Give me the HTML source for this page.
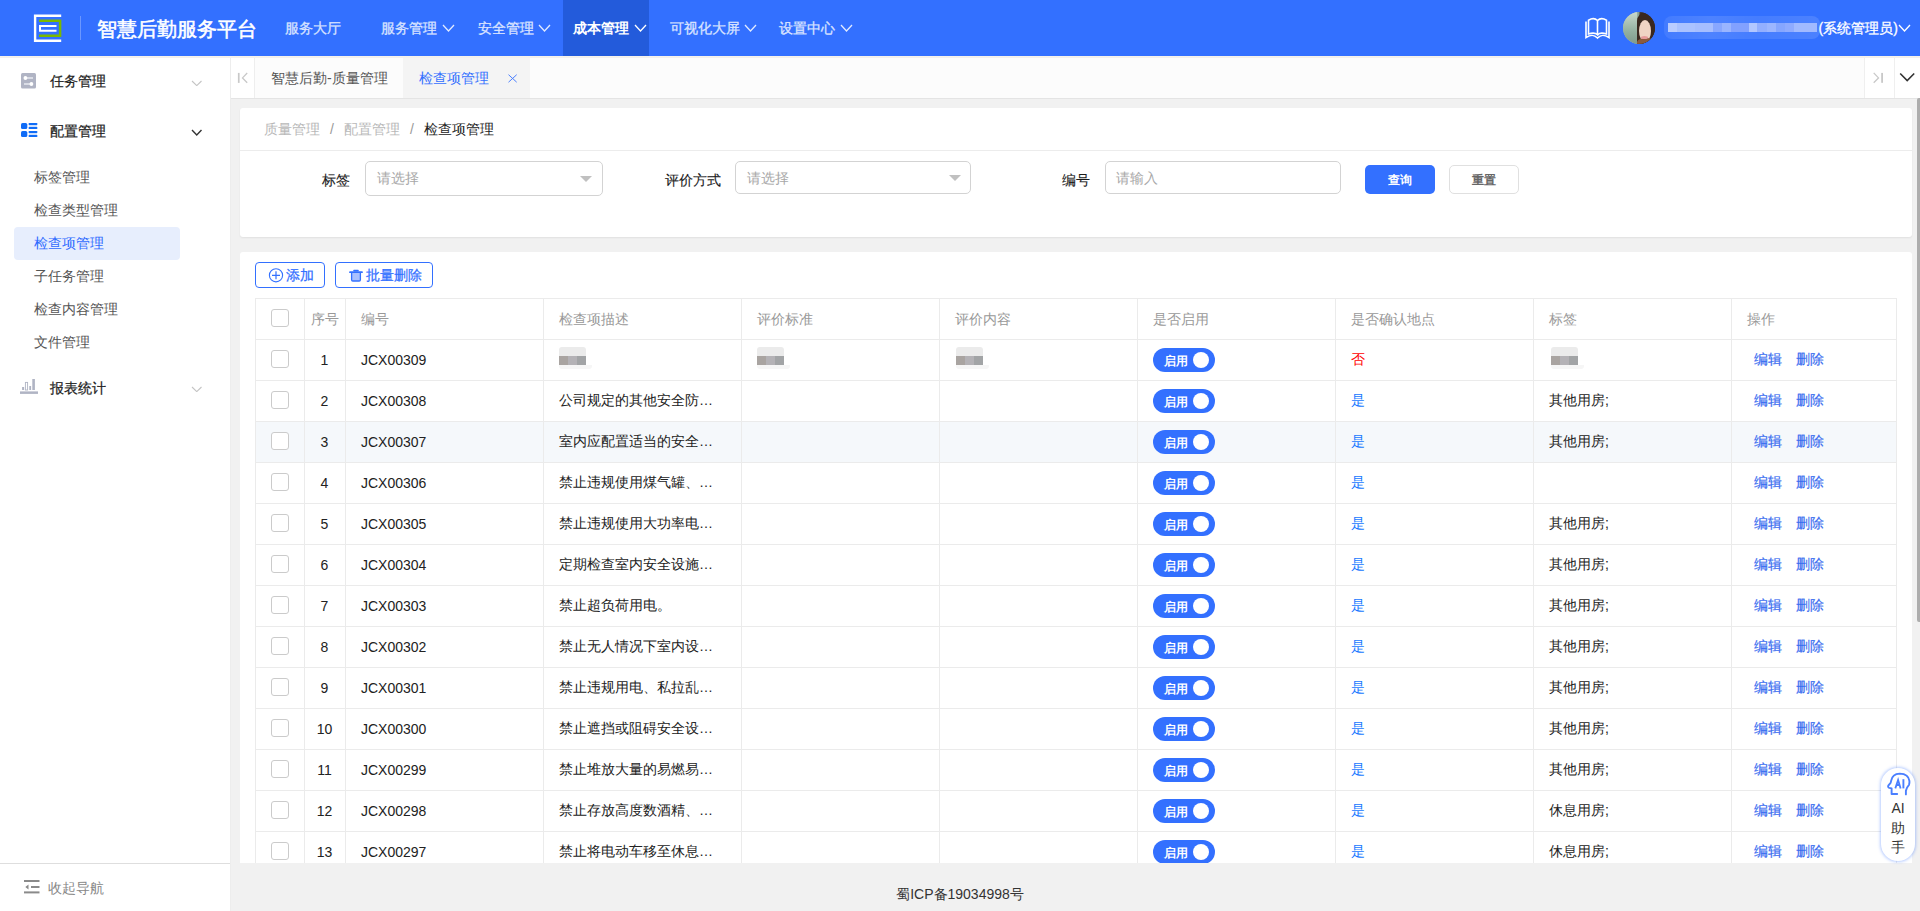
<!DOCTYPE html>
<html><head><meta charset="utf-8"><title>检查项管理</title><style>
*{margin:0;padding:0;box-sizing:border-box}
html,body{width:1920px;height:911px;overflow:hidden}
body{position:relative;background:#f1f1f1;font-family:"Liberation Sans",sans-serif;font-size:14px;color:#333}
.a{position:absolute;white-space:nowrap}
#hd{left:0;top:0;width:1920px;height:56px;background:#3370ff}
.nav{top:0;height:56px;line-height:56px;color:#d9e3ff;-webkit-text-stroke:.3px #d9e3ff;font-size:14px}
.nav.on{color:#fff;font-weight:bold;-webkit-text-stroke:0}
.chev{position:absolute}
#side{left:0;top:56px;width:231px;height:855px;background:#fff;border-right:1px solid #ededed}
.mt{font-size:14px;color:#1f1f1f;-webkit-text-stroke:.25px #1f1f1f;line-height:20px}
.sm{font-size:14px;color:#555;line-height:20px}
#tabs{left:231px;top:58px;width:1689px;height:41px;background:#fcfcfc;border-bottom:1px solid #e4e4e4}
.card{background:#fff;border-radius:3px;box-shadow:0 1px 2px rgba(0,0,0,.07)}
.lbl{font-size:14px;color:#1a1a1a;-webkit-text-stroke:.12px #1a1a1a;line-height:20px}
.sel{border:1px solid #d3d3d3;border-radius:5px;background:#fff}
.ph{font-size:14px;color:#a8a8a8;line-height:20px}
.tri{position:absolute;width:0;height:0;border-left:6px solid transparent;border-right:6px solid transparent;border-top:6px solid #c0c0c0}
.th{font-size:14px;color:#999;line-height:20px}
.td{font-size:14px;color:#222;line-height:20px}
.cb{position:absolute;width:17.5px;height:17.5px;border:1px solid #cbcbcb;border-radius:3px;background:#fff}
.sw{position:absolute;width:62px;height:24px;border-radius:12px;background:#3370ff}
.sw b{position:absolute;left:11px;top:3px;font-size:12px;line-height:20px;color:#fff;font-weight:bold}
.sw i{position:absolute;right:6px;top:4px;width:16px;height:16px;border-radius:50%;background:#fff}
.lk{font-size:14px;color:#3a6df0;line-height:20px;-webkit-text-stroke:.2px #3a6df0}
.blur{position:absolute}
</style></head><body>
<div class="a" id="hd"></div>
<svg class="a" style="left:30px;top:10px" width="36" height="36" viewBox="30 10 36 36">
<path d="M61.2 15.8H35.1V40.8H61.2" fill="none" stroke="#fff" stroke-width="2.4"/>
<path d="M39 20.75H60.1V35.8H39" fill="none" stroke="#7ab800" stroke-width="2.5"/>
<path d="M56.5 25.9H40V30.8H56.5" fill="none" stroke="#fff" stroke-width="2"/>
</svg>
<div class="a" style="left:80px;top:16px;width:1px;height:24px;background:rgba(255,255,255,.28)"></div>
<div class="a" style="left:97px;top:1px;height:56px;line-height:56px;font-size:20px;color:#fff;-webkit-text-stroke:.55px #fff">智慧后勤服务平台</div>
<div class="a nav" style="left:285px">服务大厅</div>
<div class="a" style="left:563px;top:0;width:86px;height:56px;background:#235bdb"></div>
<div class="a nav" style="left:381px">服务管理</div>
<svg class="a" style="left:441.5px;top:23.5px" width="13" height="8" viewBox="-1 -1 13 8"><path d="M0 0L5.5 6L11 0" fill="none" stroke="rgba(255,255,255,.85)" stroke-width="1.3"/></svg>
<div class="a nav" style="left:478px">安全管理</div>
<svg class="a" style="left:538px;top:23.5px" width="13" height="8" viewBox="-1 -1 13 8"><path d="M0 0L5.5 6L11 0" fill="none" stroke="rgba(255,255,255,.85)" stroke-width="1.3"/></svg>
<div class="a nav on" style="left:573px">成本管理</div>
<svg class="a" style="left:634px;top:23.5px" width="13" height="8" viewBox="-1 -1 13 8"><path d="M0 0L5.5 6L11 0" fill="none" stroke="#fff" stroke-width="1.3"/></svg>
<div class="a nav" style="left:670px">可视化大屏</div>
<svg class="a" style="left:744px;top:23.5px" width="13" height="8" viewBox="-1 -1 13 8"><path d="M0 0L5.5 6L11 0" fill="none" stroke="rgba(255,255,255,.85)" stroke-width="1.3"/></svg>
<div class="a nav" style="left:779px">设置中心</div>
<svg class="a" style="left:840px;top:23.5px" width="13" height="8" viewBox="-1 -1 13 8"><path d="M0 0L5.5 6L11 0" fill="none" stroke="rgba(255,255,255,.85)" stroke-width="1.3"/></svg>
<svg class="a" style="left:1583px;top:17px" width="29" height="23" viewBox="0 0 29 23">
<path d="M3 4.5V20.5C8 17.5 11 17.5 14.5 21C18 17.5 21 17.5 26 20.5V4.5" fill="none" stroke="#fff" stroke-width="1.6"/>
<path d="M5.5 17V3.2C9 1 12.5 1.5 14.5 3.5V17.8C12.5 15.8 9 15.8 5.5 17Z" fill="none" stroke="#fff" stroke-width="1.6"/>
<path d="M14.5 3.5C16.5 1.5 20 1 23.5 3.2V17C20 15.8 16.5 15.8 14.5 17.8" fill="none" stroke="#fff" stroke-width="1.6"/>
</svg>
<div class="a" style="left:1623px;top:12px;width:32px;height:32px;border-radius:50%;overflow:hidden;background:linear-gradient(90deg,#9fb8a9 0%,#b4c8bb 30%,#8fa89a 48%,#3d2b22 55%,#3d2b22 100%)">
<div style="position:absolute;left:0;top:0;width:14px;height:32px;background:linear-gradient(180deg,#c9d8cc,#93b0a0 60%,#7f9a8c)"></div>
<div style="position:absolute;left:14px;top:0;width:18px;height:32px;border-radius:9px 0 0 0;background:#3a281f"></div>
<div style="position:absolute;left:16px;top:8px;width:12px;height:22px;border-radius:50%;background:#f0d4c4"></div>
<div style="position:absolute;left:14px;top:26px;width:18px;height:8px;background:#8a5a3c;border-radius:50% 50% 0 0"></div>
<div style="position:absolute;left:18px;top:24px;width:7px;height:3px;border-radius:50%;background:#e79a9a"></div>
</div>
<div class="a" style="left:1664px;top:16px;width:156px;height:23px;border-radius:8px;background:linear-gradient(90deg,rgba(255,255,255,.08),rgba(255,255,255,.13) 30%,rgba(255,255,255,.09) 60%,rgba(255,255,255,.12))"></div>
<div class="a" style="left:1668px;top:23px;width:149px;height:9px;background:linear-gradient(90deg,#b9ccff 0.0%,#b9ccff 5.9%,#aac2ff 5.9%,#aac2ff 18.2%,#a6beff 18.2%,#a6beff 30.0%,#88a7ff 30.0%,#88a7ff 36.4%,#9ab5ff 36.4%,#9ab5ff 42.3%,#82a1ff 42.3%,#82a1ff 54.1%,#b2c7ff 54.1%,#b2c7ff 60.0%,#93afff 60.0%,#93afff 66.4%,#9cb6ff 66.4%,#9cb6ff 72.3%,#86a6ff 72.3%,#86a6ff 78.2%,#8fabff 78.2%,#8fabff 84.5%,#a1baff 84.5%,#a1baff 100.0%)"></div>
<div class="a" style="left:1818.5px;top:0;height:56px;line-height:56px;font-size:14px;color:#fff;-webkit-text-stroke:.3px #fff">(系统管理员)</div>
<svg class="a" style="left:1898px;top:23.5px" width="13" height="8" viewBox="-1 -1 13 8"><path d="M0 0L5.5 6L11 0" fill="none" stroke="#fff" stroke-width="1.3"/></svg>
<div class="a" id="side"></div>
<div class="a" style="left:0;top:56px;width:1920px;height:2px;background:linear-gradient(#f6f3ea,#efefef)"></div>
<svg class="a" style="left:21px;top:73px" width="15" height="16" viewBox="0 0 15 16">
<rect x="0" y="0" width="15" height="15.5" rx="1.5" fill="#b0b4c4"/>
<line x1="4.5" y1="5" x2="12" y2="5" stroke="#e4e6ee" stroke-width="1.6"/>
<circle cx="4.4" cy="5" r="1.9" fill="#fff"/>
<line x1="3" y1="11" x2="10.5" y2="11" stroke="#e4e6ee" stroke-width="1.6"/>
<circle cx="10.4" cy="11" r="1.9" fill="#fff"/>
</svg>
<div class="a mt" style="left:50px;top:71px">任务管理</div>
<svg class="a" style="left:191px;top:79.5px" width="11.5" height="6.6" viewBox="-1 -1 11.5 6.6"><path d="M0 0L4.75 4.6L9.5 0" fill="none" stroke="#c4c4c4" stroke-width="1.1"/></svg>
<svg class="a" style="left:21px;top:122px" width="17" height="16" viewBox="0 0 17 16">
<rect x="0" y="1" width="6.3" height="6" rx="1.6" fill="#0f6cf7"/>
<rect x="0" y="9" width="6.3" height="6" rx="1.6" fill="#0f6cf7"/>
<rect x="8" y="2" width="8" height="4" fill="#cfe0fd"/>
<rect x="8" y="10" width="8" height="4" fill="#cfe0fd"/>
<line x1="8.5" y1="2" x2="15.5" y2="2" stroke="#0f6cf7" stroke-width="2" stroke-linecap="round"/>
<line x1="8.5" y1="6" x2="15.5" y2="6" stroke="#0f6cf7" stroke-width="2" stroke-linecap="round"/>
<line x1="8.5" y1="10" x2="15.5" y2="10" stroke="#0f6cf7" stroke-width="2" stroke-linecap="round"/>
<line x1="8.5" y1="14" x2="15.5" y2="14" stroke="#0f6cf7" stroke-width="2" stroke-linecap="round"/>
</svg>
<div class="a mt" style="left:50px;top:120.5px">配置管理</div>
<svg class="a" style="left:191px;top:128.5px" width="11.5" height="7" viewBox="-1 -1 11.5 7"><path d="M0 0L4.75 5L9.5 0" fill="none" stroke="#333" stroke-width="1.4"/></svg>
<div class="a" style="left:14px;top:227px;width:166px;height:33px;border-radius:4px;background:#e7eefd"></div>
<div class="a sm" style="left:34px;top:166.5px;color:#555">标签管理</div>
<div class="a sm" style="left:34px;top:199.5px;color:#555">检查类型管理</div>
<div class="a sm" style="left:34px;top:232.5px;color:#2f6bff">检查项管理</div>
<div class="a sm" style="left:34px;top:265.5px;color:#555">子任务管理</div>
<div class="a sm" style="left:34px;top:298.5px;color:#555">检查内容管理</div>
<div class="a sm" style="left:34px;top:331.5px;color:#555">文件管理</div>
<svg class="a" style="left:20px;top:378px" width="18" height="17" viewBox="0 0 18 17">
<rect x="0" y="13.4" width="18" height="2.5" fill="#b0b4c4"/>
<rect x="2.1" y="9" width="2" height="3" fill="#b0b4c4"/>
<rect x="5.4" y="4.4" width="2.2" height="7.6" fill="none" stroke="#b0b4c4" stroke-width=".9"/>
<rect x="9.3" y="8" width="1.8" height="4" fill="#b0b4c4"/>
<rect x="12.3" y="1" width="2.6" height="11" fill="#b0b4c4"/>
</svg>
<div class="a mt" style="left:50px;top:377.5px">报表统计</div>
<svg class="a" style="left:191px;top:385.5px" width="11.5" height="6.6" viewBox="-1 -1 11.5 6.6"><path d="M0 0L4.75 4.6L9.5 0" fill="none" stroke="#c4c4c4" stroke-width="1.1"/></svg>
<div class="a" style="left:0;top:863px;width:230px;height:1px;background:#dedede"></div>
<svg class="a" style="left:24px;top:879px" width="16" height="15" viewBox="0 0 16 15">
<rect x="0" y="1" width="15.5" height="2" fill="#8a8a8a"/>
<rect x="7" y="7" width="8.5" height="2" fill="#8a8a8a"/>
<rect x="0" y="12.4" width="15.5" height="2" fill="#8a8a8a"/>
<path d="M1.3 8L4.5 5.6V10.4Z" fill="#8a8a8a"/>
</svg>
<div class="a sm" style="left:48px;top:877.5px;color:#888">收起导航</div>
<div class="a" id="tabs"></div>
<div class="a" style="left:231px;top:58px;width:24px;height:40px;background:#fff;border-right:1px solid #eeeeee"></div>
<svg class="a" style="left:237px;top:72px" width="12" height="12" viewBox="0 0 12 12">
<rect x="0.9" y="0.9" width="1.7" height="10" fill="#c8c8c8"/>
<path d="M10.2 1L5.5 5.9L10.2 10.8" fill="none" stroke="#c8c8c8" stroke-width="1.3"/>
</svg>
<div class="a" style="left:403px;top:58px;width:127px;height:40px;background:#f4f4f4"></div>
<div class="a" style="left:271px;top:67.5px;font-size:14px;line-height:20px;color:#555">智慧后勤-质量管理</div>
<div class="a" style="left:419px;top:67.5px;font-size:14px;line-height:20px;color:#3370ff">检查项管理</div>
<svg class="a" style="left:507px;top:73px" width="11" height="11" viewBox="0 0 11 11">
<path d="M1.5 1.7L9.7 9.2M9.7 1.7L1.5 9.2" stroke="#4b80ff" stroke-width="1"/></svg>
<div class="a" style="left:1864px;top:58px;width:56px;height:40px;background:#fff;border-left:1px solid #efefef"></div>
<div class="a" style="left:1894px;top:58px;width:1px;height:40px;background:#efefef"></div>
<svg class="a" style="left:1872px;top:71px" width="13" height="13" viewBox="0 0 13 13">
<path d="M1.7 1.9L6.5 6.9L1.7 11.8" fill="none" stroke="#c8c8c8" stroke-width="1.3"/>
<rect x="9.2" y="1.9" width="1.8" height="9.9" fill="#c8c8c8"/></svg>
<svg class="a" style="left:1899px;top:72px" width="17" height="11" viewBox="0 0 17 11">
<path d="M1.2 1.5L8.2 8.5L15.2 1.5" fill="none" stroke="#333" stroke-width="1.6"/></svg>
<div class="a card" style="left:240px;top:108px;width:1672px;height:129px"></div>
<div class="a" style="left:240px;top:150px;width:1672px;height:1px;background:#ececec"></div>
<div class="a" style="left:264px;top:119px;font-size:14px;line-height:20px;color:#b8b8b8">质量管理</div>
<div class="a" style="left:330px;top:119px;font-size:14px;line-height:20px;color:#999">/</div>
<div class="a" style="left:344px;top:119px;font-size:14px;line-height:20px;color:#b8b8b8">配置管理</div>
<div class="a" style="left:410px;top:119px;font-size:14px;line-height:20px;color:#999">/</div>
<div class="a" style="left:424px;top:119px;font-size:14px;line-height:20px;color:#222">检查项管理</div>
<div class="a lbl" style="left:322px;top:169.5px">标签</div>
<div class="a sel" style="left:365px;top:161px;width:238px;height:35px"></div>
<div class="a ph" style="left:377px;top:168px">请选择</div>
<div class="tri" style="left:580px;top:176px"></div>
<div class="a lbl" style="left:664.5px;top:169.5px">评价方式</div>
<div class="a sel" style="left:735px;top:161px;width:236px;height:33px"></div>
<div class="a ph" style="left:747px;top:168px">请选择</div>
<div class="tri" style="left:949px;top:175px"></div>
<div class="a lbl" style="left:1062px;top:169.5px">编号</div>
<div class="a sel" style="left:1105px;top:161px;width:236px;height:33px"></div>
<div class="a ph" style="left:1116px;top:168px">请输入</div>
<div class="a" style="left:1365px;top:165px;width:70px;height:29px;border-radius:5px;background:#3370ff"></div>
<div class="a" style="left:1388px;top:170px;font-size:12px;line-height:20px;color:#fff;font-weight:bold">查询</div>
<div class="a" style="left:1449px;top:165px;width:70px;height:29px;border-radius:5px;border:1px solid #e0e0e0;background:#fff"></div>
<div class="a" style="left:1472px;top:170px;font-size:12px;line-height:20px;color:#666;font-weight:bold">重置</div>
<div class="a card" style="left:240px;top:252px;width:1672px;height:611px;overflow:hidden;box-shadow:none;border-radius:3px 3px 0 0" id="c2">
<div class="a" style="left:15px;top:10px;width:70px;height:26px;border:1px solid #3370ff;border-radius:4px"></div>
<svg class="a" style="left:28px;top:16px" width="16" height="16" viewBox="0 0 16 16">
<circle cx="8" cy="7.3" r="6.6" fill="none" stroke="#3370ff" stroke-width="1.1"/>
<path d="M4 7.3H12M8 3.3V11.3" stroke="#3370ff" stroke-width="1.2"/></svg>
<div class="a" style="left:46px;top:13px;font-size:14px;line-height:20px;color:#3370ff;-webkit-text-stroke:.25px #3370ff">添加</div>
<div class="a" style="left:95px;top:10px;width:98px;height:26px;border:1px solid #3370ff;border-radius:4px"></div>
<svg class="a" style="left:109px;top:17px" width="14" height="13" viewBox="0 0 14 13">
<path d="M1 3.2H13" stroke="#3370ff" stroke-width="1.8" stroke-linecap="round"/>
<path d="M5 1.6H9" stroke="#3370ff" stroke-width="1.6" stroke-linecap="round"/>
<path d="M2.6 4V10.8Q2.6 12 3.8 12H10.2Q11.4 12 11.4 10.8V4" fill="#a9c0ff" stroke="#3370ff" stroke-width="1.3"/></svg>
<div class="a" style="left:126px;top:13px;font-size:14px;line-height:20px;color:#3370ff;-webkit-text-stroke:.25px #3370ff">批量删除</div>
<div class="a" style="left:15px;top:169px;width:1641px;height:41px;background:#f5f8fb"></div>
<div class="a" style="left:15px;top:46px;width:1642px;height:1px;background:#ebebeb"></div>
<div class="a" style="left:15px;top:87px;width:1642px;height:1px;background:#ebebeb"></div>
<div class="a" style="left:15px;top:128px;width:1642px;height:1px;background:#ebebeb"></div>
<div class="a" style="left:15px;top:169px;width:1642px;height:1px;background:#ebebeb"></div>
<div class="a" style="left:15px;top:210px;width:1642px;height:1px;background:#ebebeb"></div>
<div class="a" style="left:15px;top:251px;width:1642px;height:1px;background:#ebebeb"></div>
<div class="a" style="left:15px;top:292px;width:1642px;height:1px;background:#ebebeb"></div>
<div class="a" style="left:15px;top:333px;width:1642px;height:1px;background:#ebebeb"></div>
<div class="a" style="left:15px;top:374px;width:1642px;height:1px;background:#ebebeb"></div>
<div class="a" style="left:15px;top:415px;width:1642px;height:1px;background:#ebebeb"></div>
<div class="a" style="left:15px;top:456px;width:1642px;height:1px;background:#ebebeb"></div>
<div class="a" style="left:15px;top:497px;width:1642px;height:1px;background:#ebebeb"></div>
<div class="a" style="left:15px;top:538px;width:1642px;height:1px;background:#ebebeb"></div>
<div class="a" style="left:15px;top:579px;width:1642px;height:1px;background:#ebebeb"></div>
<div class="a" style="left:15px;top:620px;width:1642px;height:1px;background:#ebebeb"></div>
<div class="a" style="left:15px;top:46px;width:1px;height:574px;background:#ebebeb"></div>
<div class="a" style="left:64px;top:46px;width:1px;height:574px;background:#ebebeb"></div>
<div class="a" style="left:105px;top:46px;width:1px;height:574px;background:#ebebeb"></div>
<div class="a" style="left:303px;top:46px;width:1px;height:574px;background:#ebebeb"></div>
<div class="a" style="left:501px;top:46px;width:1px;height:574px;background:#ebebeb"></div>
<div class="a" style="left:699px;top:46px;width:1px;height:574px;background:#ebebeb"></div>
<div class="a" style="left:897px;top:46px;width:1px;height:574px;background:#ebebeb"></div>
<div class="a" style="left:1095px;top:46px;width:1px;height:574px;background:#ebebeb"></div>
<div class="a" style="left:1293px;top:46px;width:1px;height:574px;background:#ebebeb"></div>
<div class="a" style="left:1491px;top:46px;width:1px;height:574px;background:#ebebeb"></div>
<div class="a" style="left:1656px;top:46px;width:1px;height:574px;background:#ebebeb"></div>
<div class="cb" style="left:31px;top:57px"></div>
<div class="a th" style="left:71px;top:57.0px">序号</div>
<div class="a th" style="left:121px;top:57.0px">编号</div>
<div class="a th" style="left:319px;top:57.0px">检查项描述</div>
<div class="a th" style="left:517px;top:57.0px">评价标准</div>
<div class="a th" style="left:715px;top:57.0px">评价内容</div>
<div class="a th" style="left:913px;top:57.0px">是否启用</div>
<div class="a th" style="left:1111px;top:57.0px">是否确认地点</div>
<div class="a th" style="left:1309px;top:57.0px">标签</div>
<div class="a th" style="left:1507px;top:57.0px">操作</div>
<div class="cb" style="left:31px;top:98px"></div>
<div class="a td" style="left:64px;top:98.0px;width:41px;text-align:center">1</div>
<div class="a td" style="left:121px;top:98.0px">JCX00309</div>
<div class="blur" style="left:319px;top:95px;width:27px;height:9px;background:#ebebeb;border-radius:3px 3px 0 0"></div><div class="blur" style="left:319px;top:104px;width:27px;height:9px;background:linear-gradient(90deg,#a9a4a1 0,#a9a4a1 33%,#b4b2b6 33%,#b4b2b6 66%,#a2a4a6 66%)"></div><div class="blur" style="left:319px;top:113px;width:33px;height:4px;background:#f6f6f6;border-radius:0 0 3px 3px"></div>
<div class="blur" style="left:517px;top:95px;width:27px;height:9px;background:#ebebeb;border-radius:3px 3px 0 0"></div><div class="blur" style="left:517px;top:104px;width:27px;height:9px;background:linear-gradient(90deg,#a9a4a1 0,#a9a4a1 33%,#b4b2b6 33%,#b4b2b6 66%,#a2a4a6 66%)"></div><div class="blur" style="left:517px;top:113px;width:33px;height:4px;background:#f6f6f6;border-radius:0 0 3px 3px"></div>
<div class="blur" style="left:716px;top:95px;width:27px;height:9px;background:#ebebeb;border-radius:3px 3px 0 0"></div><div class="blur" style="left:716px;top:104px;width:27px;height:9px;background:linear-gradient(90deg,#a9a4a1 0,#a9a4a1 33%,#b4b2b6 33%,#b4b2b6 66%,#a2a4a6 66%)"></div><div class="blur" style="left:716px;top:113px;width:33px;height:4px;background:#f6f6f6;border-radius:0 0 3px 3px"></div>
<div class="sw" style="left:913px;top:96px"><b>启用</b><i></i></div>
<div class="a td" style="left:1111px;top:97.0px;color:#ff0000">否</div>
<div class="blur" style="left:1311px;top:95px;width:27px;height:9px;background:#ebebeb;border-radius:3px 3px 0 0"></div><div class="blur" style="left:1311px;top:104px;width:27px;height:9px;background:linear-gradient(90deg,#a9a4a1 0,#a9a4a1 33%,#b4b2b6 33%,#b4b2b6 66%,#a2a4a6 66%)"></div><div class="blur" style="left:1311px;top:113px;width:33px;height:4px;background:#f6f6f6;border-radius:0 0 3px 3px"></div>
<div class="a lk" style="left:1514px;top:97.0px">编辑</div>
<div class="a lk" style="left:1556px;top:97.0px">删除</div>
<div class="cb" style="left:31px;top:139px"></div>
<div class="a td" style="left:64px;top:139.0px;width:41px;text-align:center">2</div>
<div class="a td" style="left:121px;top:139.0px">JCX00308</div>
<div class="a td" style="left:319px;top:138.0px">公司规定的其他安全防…</div>
<div class="sw" style="left:913px;top:137px"><b>启用</b><i></i></div>
<div class="a td" style="left:1111px;top:138.0px;color:#1677ff">是</div>
<div class="a td" style="left:1309px;top:138.0px">其他用房;</div>
<div class="a lk" style="left:1514px;top:138.0px">编辑</div>
<div class="a lk" style="left:1556px;top:138.0px">删除</div>
<div class="cb" style="left:31px;top:180px"></div>
<div class="a td" style="left:64px;top:180.0px;width:41px;text-align:center">3</div>
<div class="a td" style="left:121px;top:180.0px">JCX00307</div>
<div class="a td" style="left:319px;top:179.0px">室内应配置适当的安全…</div>
<div class="sw" style="left:913px;top:178px"><b>启用</b><i></i></div>
<div class="a td" style="left:1111px;top:179.0px;color:#1677ff">是</div>
<div class="a td" style="left:1309px;top:179.0px">其他用房;</div>
<div class="a lk" style="left:1514px;top:179.0px">编辑</div>
<div class="a lk" style="left:1556px;top:179.0px">删除</div>
<div class="cb" style="left:31px;top:221px"></div>
<div class="a td" style="left:64px;top:221.0px;width:41px;text-align:center">4</div>
<div class="a td" style="left:121px;top:221.0px">JCX00306</div>
<div class="a td" style="left:319px;top:220.0px">禁止违规使用煤气罐、…</div>
<div class="sw" style="left:913px;top:219px"><b>启用</b><i></i></div>
<div class="a td" style="left:1111px;top:220.0px;color:#1677ff">是</div>
<div class="a lk" style="left:1514px;top:220.0px">编辑</div>
<div class="a lk" style="left:1556px;top:220.0px">删除</div>
<div class="cb" style="left:31px;top:262px"></div>
<div class="a td" style="left:64px;top:262.0px;width:41px;text-align:center">5</div>
<div class="a td" style="left:121px;top:262.0px">JCX00305</div>
<div class="a td" style="left:319px;top:261.0px">禁止违规使用大功率电…</div>
<div class="sw" style="left:913px;top:260px"><b>启用</b><i></i></div>
<div class="a td" style="left:1111px;top:261.0px;color:#1677ff">是</div>
<div class="a td" style="left:1309px;top:261.0px">其他用房;</div>
<div class="a lk" style="left:1514px;top:261.0px">编辑</div>
<div class="a lk" style="left:1556px;top:261.0px">删除</div>
<div class="cb" style="left:31px;top:303px"></div>
<div class="a td" style="left:64px;top:303.0px;width:41px;text-align:center">6</div>
<div class="a td" style="left:121px;top:303.0px">JCX00304</div>
<div class="a td" style="left:319px;top:302.0px">定期检查室内安全设施…</div>
<div class="sw" style="left:913px;top:301px"><b>启用</b><i></i></div>
<div class="a td" style="left:1111px;top:302.0px;color:#1677ff">是</div>
<div class="a td" style="left:1309px;top:302.0px">其他用房;</div>
<div class="a lk" style="left:1514px;top:302.0px">编辑</div>
<div class="a lk" style="left:1556px;top:302.0px">删除</div>
<div class="cb" style="left:31px;top:344px"></div>
<div class="a td" style="left:64px;top:344.0px;width:41px;text-align:center">7</div>
<div class="a td" style="left:121px;top:344.0px">JCX00303</div>
<div class="a td" style="left:319px;top:343.0px">禁止超负荷用电。</div>
<div class="sw" style="left:913px;top:342px"><b>启用</b><i></i></div>
<div class="a td" style="left:1111px;top:343.0px;color:#1677ff">是</div>
<div class="a td" style="left:1309px;top:343.0px">其他用房;</div>
<div class="a lk" style="left:1514px;top:343.0px">编辑</div>
<div class="a lk" style="left:1556px;top:343.0px">删除</div>
<div class="cb" style="left:31px;top:385px"></div>
<div class="a td" style="left:64px;top:385.0px;width:41px;text-align:center">8</div>
<div class="a td" style="left:121px;top:385.0px">JCX00302</div>
<div class="a td" style="left:319px;top:384.0px">禁止无人情况下室内设…</div>
<div class="sw" style="left:913px;top:383px"><b>启用</b><i></i></div>
<div class="a td" style="left:1111px;top:384.0px;color:#1677ff">是</div>
<div class="a td" style="left:1309px;top:384.0px">其他用房;</div>
<div class="a lk" style="left:1514px;top:384.0px">编辑</div>
<div class="a lk" style="left:1556px;top:384.0px">删除</div>
<div class="cb" style="left:31px;top:426px"></div>
<div class="a td" style="left:64px;top:426.0px;width:41px;text-align:center">9</div>
<div class="a td" style="left:121px;top:426.0px">JCX00301</div>
<div class="a td" style="left:319px;top:425.0px">禁止违规用电、私拉乱…</div>
<div class="sw" style="left:913px;top:424px"><b>启用</b><i></i></div>
<div class="a td" style="left:1111px;top:425.0px;color:#1677ff">是</div>
<div class="a td" style="left:1309px;top:425.0px">其他用房;</div>
<div class="a lk" style="left:1514px;top:425.0px">编辑</div>
<div class="a lk" style="left:1556px;top:425.0px">删除</div>
<div class="cb" style="left:31px;top:467px"></div>
<div class="a td" style="left:64px;top:467.0px;width:41px;text-align:center">10</div>
<div class="a td" style="left:121px;top:467.0px">JCX00300</div>
<div class="a td" style="left:319px;top:466.0px">禁止遮挡或阻碍安全设…</div>
<div class="sw" style="left:913px;top:465px"><b>启用</b><i></i></div>
<div class="a td" style="left:1111px;top:466.0px;color:#1677ff">是</div>
<div class="a td" style="left:1309px;top:466.0px">其他用房;</div>
<div class="a lk" style="left:1514px;top:466.0px">编辑</div>
<div class="a lk" style="left:1556px;top:466.0px">删除</div>
<div class="cb" style="left:31px;top:508px"></div>
<div class="a td" style="left:64px;top:508.0px;width:41px;text-align:center">11</div>
<div class="a td" style="left:121px;top:508.0px">JCX00299</div>
<div class="a td" style="left:319px;top:507.0px">禁止堆放大量的易燃易…</div>
<div class="sw" style="left:913px;top:506px"><b>启用</b><i></i></div>
<div class="a td" style="left:1111px;top:507.0px;color:#1677ff">是</div>
<div class="a td" style="left:1309px;top:507.0px">其他用房;</div>
<div class="a lk" style="left:1514px;top:507.0px">编辑</div>
<div class="a lk" style="left:1556px;top:507.0px">删除</div>
<div class="cb" style="left:31px;top:549px"></div>
<div class="a td" style="left:64px;top:549.0px;width:41px;text-align:center">12</div>
<div class="a td" style="left:121px;top:549.0px">JCX00298</div>
<div class="a td" style="left:319px;top:548.0px">禁止存放高度数酒精、…</div>
<div class="sw" style="left:913px;top:547px"><b>启用</b><i></i></div>
<div class="a td" style="left:1111px;top:548.0px;color:#1677ff">是</div>
<div class="a td" style="left:1309px;top:548.0px">休息用房;</div>
<div class="a lk" style="left:1514px;top:548.0px">编辑</div>
<div class="a lk" style="left:1556px;top:548.0px">删除</div>
<div class="cb" style="left:31px;top:590px"></div>
<div class="a td" style="left:64px;top:590.0px;width:41px;text-align:center">13</div>
<div class="a td" style="left:121px;top:590.0px">JCX00297</div>
<div class="a td" style="left:319px;top:589.0px">禁止将电动车移至休息…</div>
<div class="sw" style="left:913px;top:588px"><b>启用</b><i></i></div>
<div class="a td" style="left:1111px;top:589.0px;color:#1677ff">是</div>
<div class="a td" style="left:1309px;top:589.0px">休息用房;</div>
<div class="a lk" style="left:1514px;top:589.0px">编辑</div>
<div class="a lk" style="left:1556px;top:589.0px">删除</div>
</div>
<div class="a" style="left:1917px;top:98px;width:3px;height:524px;background:#adadad;border-radius:2px 0 0 2px"></div>
<div class="a" style="left:1881px;top:768px;width:34px;height:93px;border-radius:17px;background:#fff;box-shadow:0 0 3px 1px rgba(51,112,255,.35)"></div>
<svg class="a" style="left:1884px;top:770px" width="30" height="30" viewBox="0 0 30 30">
<path d="M21.9 24.4V20.7Q22.5 17.5 25 14.8Q25.6 12.8 25.4 10.9Q24.5 3.8 15.8 3.6Q8.2 3.8 7.1 10.9Q6.9 12.3 6.6 12.8L4.3 15.6Q3.6 17.3 5.2 17.9L7.6 18.4V24H13.2" fill="none" stroke="#4a7fff" stroke-width="1.9" stroke-linejoin="round" stroke-linecap="round"/>
<path d="M11.3 18.4L14.1 10L16.6 18.4M12.3 15H15.7" fill="none" stroke="#4a7fff" stroke-width="1.8"/>
<path d="M19.4 9.2V18.4" stroke="#4a7fff" stroke-width="1.9"/>
</svg>
<div class="a" style="left:1881px;top:799px;width:34px;font-size:14px;line-height:19.5px;color:#333;text-align:center;white-space:normal">AI<br>助<br>手</div>
<div class="a" style="left:0;top:884px;width:1920px;text-align:center;font-size:14px;line-height:20px;color:#333">蜀ICP备19034998号</div>
</body></html>
